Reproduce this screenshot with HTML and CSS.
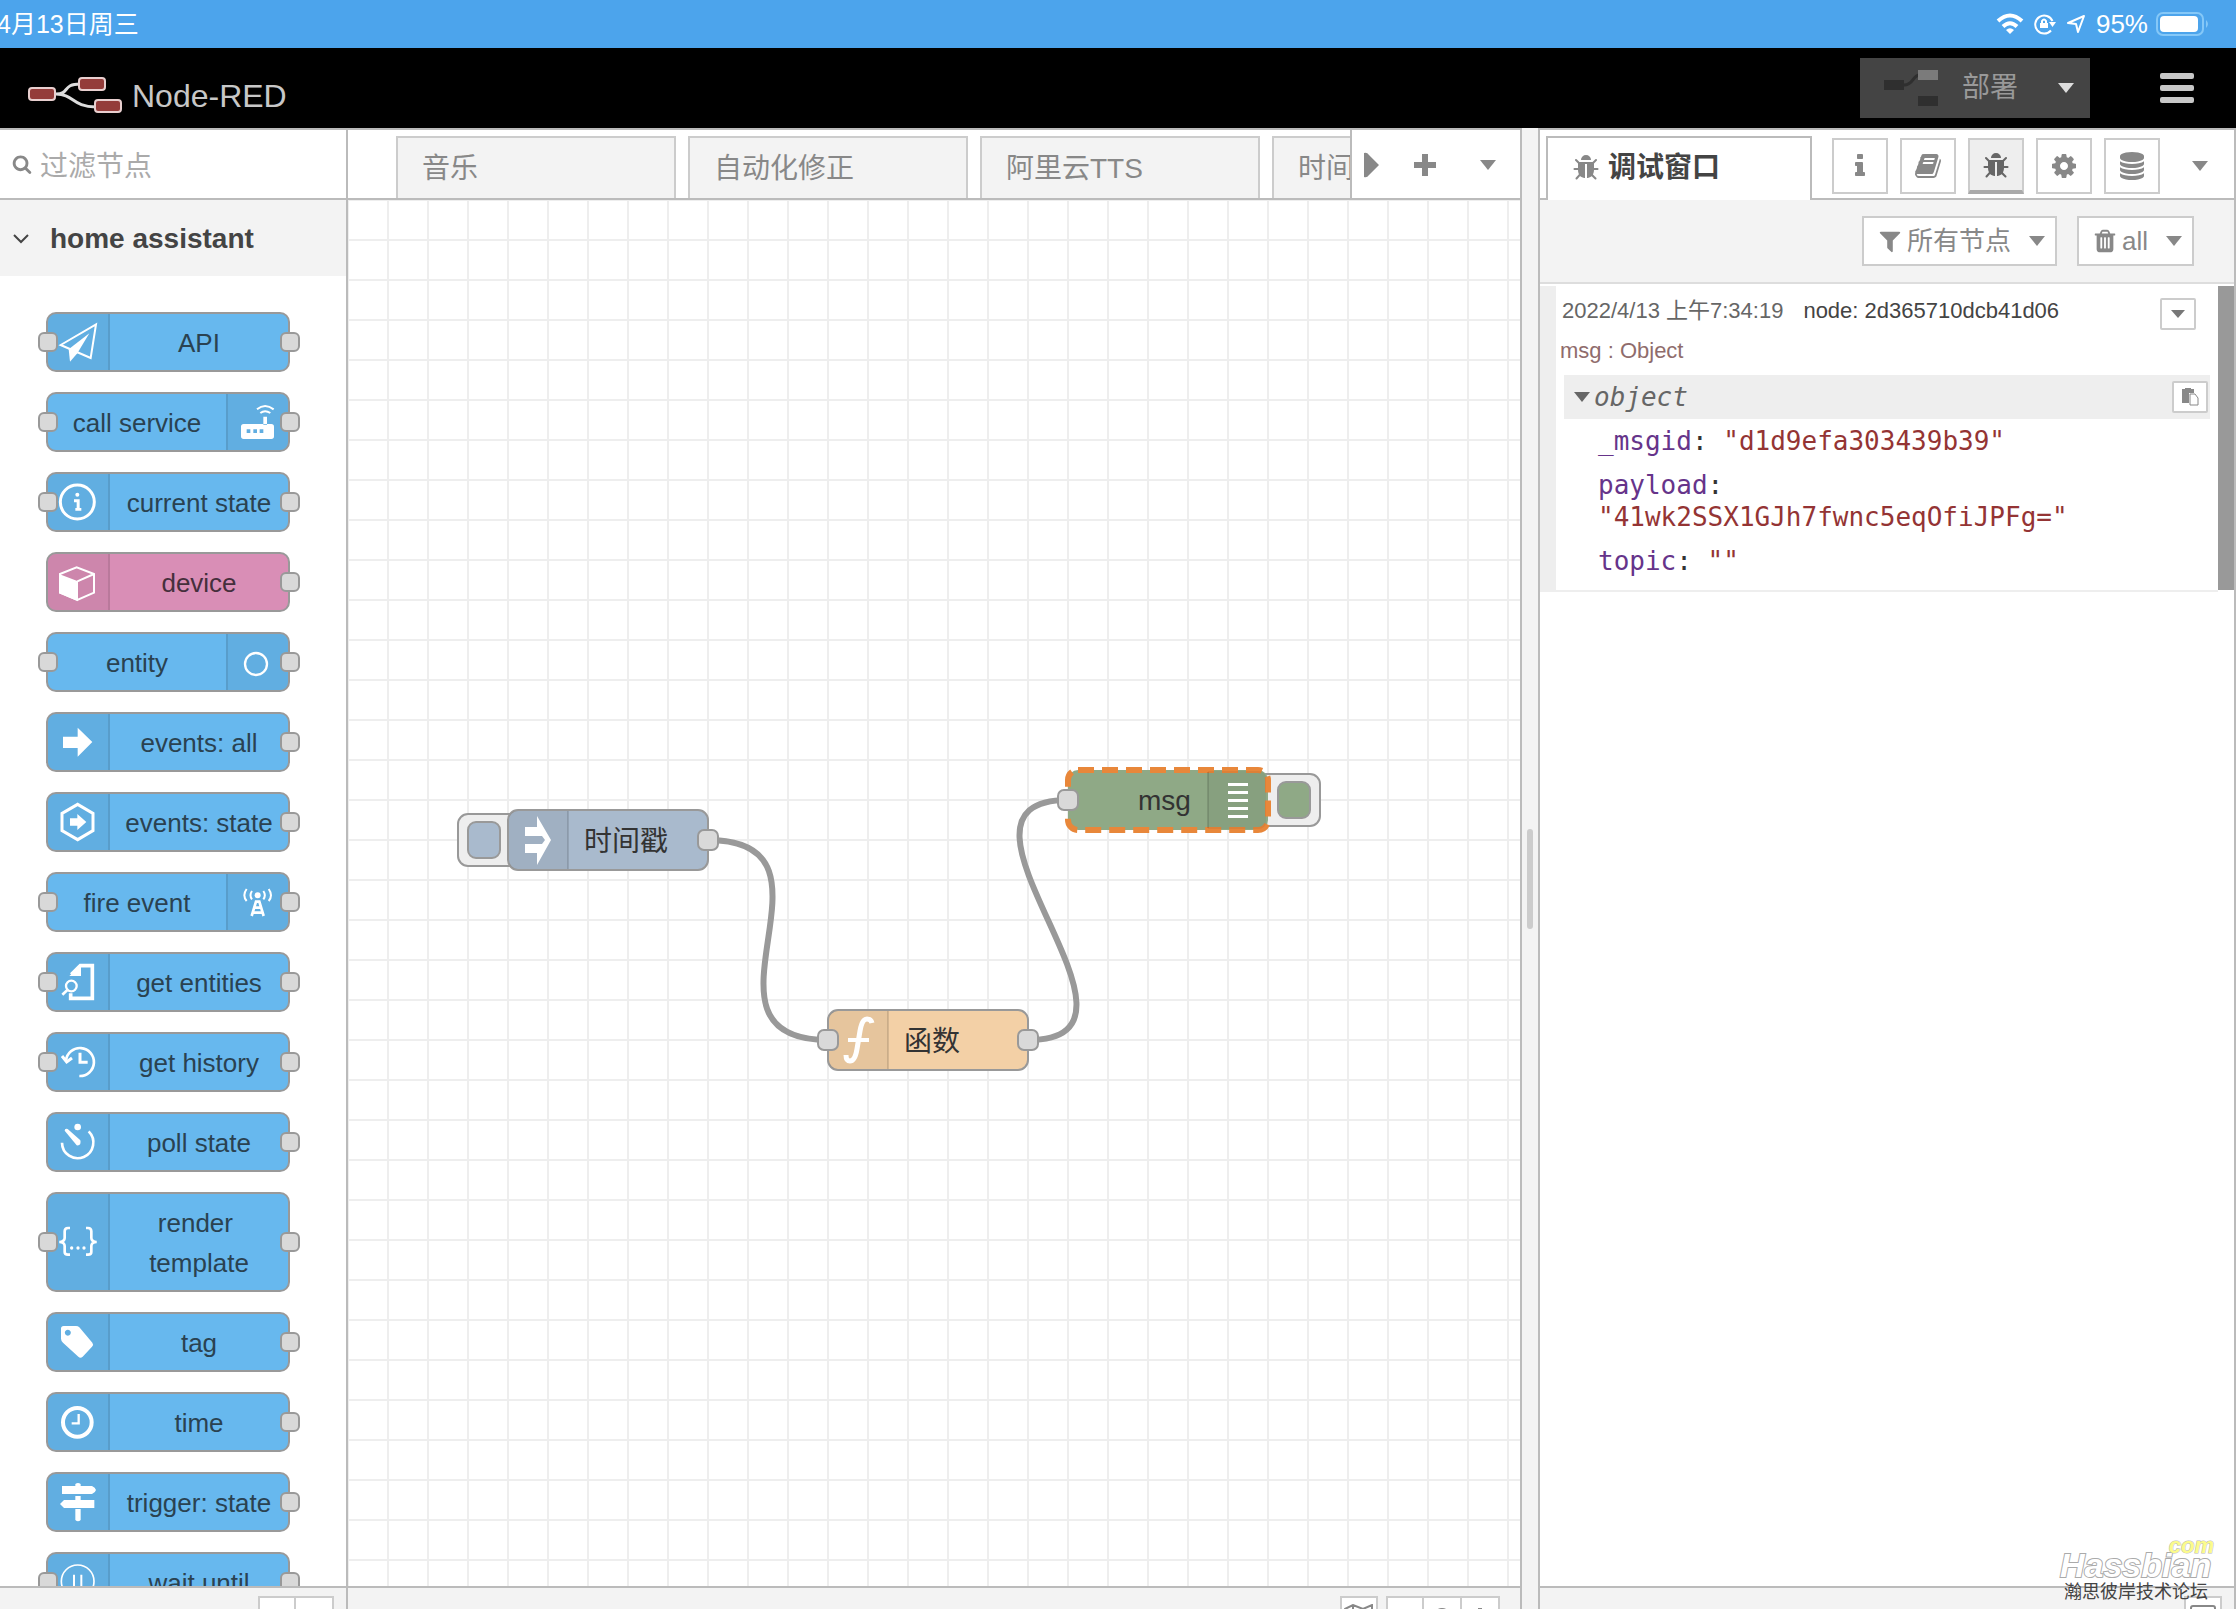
FILE: index.html
```html
<!DOCTYPE html>
<html lang="zh-CN">
<head>
<meta charset="utf-8">
<title>Node-RED</title>
<link rel="stylesheet" href="styles.css">
</head>
<body>
<svg class="defs" aria-hidden="true">
  <symbol id="bug" viewBox="0 0 1792 1792"><path d="M1696 960q0 26-19 45t-45 19h-224q0 171-67 290l208 209q19 19 19 45t-19 45q-18 19-45 19t-45-19l-198-197q-5 5-15 13t-42 28.5-65 36.5-82 29-97 13v-896h-128v896q-51 0-101.5-13.5t-87-33-66-39-43.5-32.5l-15-14-183 207q-20 21-48 21-24 0-43-16-19-18-20.5-44.5t15.5-46.5l202-227q-58-114-58-274h-224q-26 0-45-19t-19-45 19-45 45-19h224v-294l-173-173q-19-19-19-45t19-45 45-19 45 19l173 173h844l173-173q19-19 45-19t45 19 19 45-19 45l-173 173v294h224q26 0 45 19t19 45zm-480-576h-640q0-133 93.5-226.5t226.5-93.5 226.5 93.5 93.5 226.5z"/></symbol>
</svg>

<div class="status">
  <span class="date">4月13日周三</span>
  <span class="status-right">
    <svg width="28" height="22" viewBox="0 0 28 22" fill="none" stroke="#fff" stroke-width="4"><path d="M2 8Q14-3 26 8"/><path d="M7 13.500Q14 7 21 13.500"/><path d="M14 21l-4-4q4-3.500 8 0z" fill="#fff" stroke="none"/></svg>
    <svg width="22" height="22" viewBox="0 0 22 22" fill="none" stroke="#fff" stroke-width="2"><path d="M17 17.500A9 9 0 1 1 18.500 8"/><path d="M15 9h7l-3.500 5z" fill="#fff" stroke="none"/><path d="M6 10h8v5H6z" fill="#fff" stroke="none"/><path d="M8 11V8q2-3 4 0v3"/></svg>
    <svg width="20" height="20" viewBox="0 0 20 20" fill="none" stroke="#fff" stroke-width="2" stroke-linejoin="round"><path d="M2 9L18 2 12 18 10 10z"/></svg>
    <span class="percent">95%</span>
    <svg width="52" height="24" viewBox="0 0 52 24"><rect x="1" y="1" width="46" height="22" rx="6" fill="none" stroke="#85c8f8" stroke-width="2"/><rect x="4" y="4" width="38" height="16" rx="4" fill="#fff"/><path d="M50 8q4 4 0 8z" fill="#85c8f8"/></svg>
  </span>
</div>

<header class="header">
  <a class="logo" href="#">
    <svg width="96" height="38" viewBox="0 0 96 38"><g fill="none" stroke="#ddd" stroke-width="3"><path d="M28 18C42 18 34 8 52 8M28 18C46 18 44 31 68 31"/></g><g fill="#943c3a" stroke="#e8cfcf" stroke-width="2"><rect x="1" y="12" width="26" height="12" rx="3"/><rect x="51" y="2" width="26" height="12" rx="3"/><rect x="67" y="24" width="26" height="12" rx="3"/></g></svg>
    <span>Node-RED</span>
  </a>
  <div class="header-tools">
    <button class="deploy">
      <svg width="54" height="36" viewBox="0 0 54 36"><path class="link" d="M20 15C30 15 28 5 36 5"/><path d="M0 10h20v10H0zM34 26h20v10H34z" fill="#2f2f2f"/><path d="M34 0h20v10H34z" fill="#7b7b7b"/></svg>
      <span>部署</span><i class="caret"></i>
    </button>
    <button class="menu" aria-label="menu"><i></i><i></i><i></i></button>
  </div>
</header>

<main class="main">
  <aside class="palette">
    <label class="search">
      <svg class="glyph" width="20" height="20" viewBox="0 0 1792 1792"><path d="M1216 832q0-185-131.500-316.500t-316.500-131.500-316.500 131.500-131.500 316.500 131.500 316.500 316.500 131.500 316.500-131.500 131.500-316.500zm512 832q0 52-38 90t-90 38q-54 0-90-38l-343-342q-179 124-399 124-143 0-273.500-55.500t-225-150-150-225-55.500-273.500 55.500-273.500 150-225 225-150 273.500-55.500 273.500 55.500 225 150 150 225 55.500 273.500q0 220-124 399l343 343q37 37 37 90z"/></svg>
      <input type="text" placeholder="过滤节点">
    </label>
    <div class="category"><svg width="18" height="12" viewBox="0 0 18 12" fill="none" stroke="#444" stroke-width="2"><path d="M2 2l7 7 7-7"/></svg>home assistant</div>
    <div class="nodes">
      <div class="node in out"><svg class="icon" viewBox="0 0 180 168"><path class="line" d="M38 93L144 31 128 132z"/><path d="M124 58L62 106 66 143 88 118z"/></svg><span>API</span></div>
      <div class="node in out right"><svg class="icon" viewBox="0 0 180 168"><path fill-rule="evenodd" d="M47 90h83q8 0 8 8v29q0 8-8 8H47q-8 0-8-8V98q0-8 8-8zM56 106v11h11v-11zM76 106v11h11v-11zM95 106v11h11v-11zM106 68h11v24h-11z"/><path class="line" d="M87 46Q111 26 137 46M97 57Q111 46 127 57"/></svg><span>call service</span></div>
      <div class="node in out"><svg class="icon" viewBox="0 0 180 168"><circle class="line" cx="88" cy="84" r="51" stroke-width="9"/><circle cx="88" cy="62" r="6"/><path d="M78 76h17v26h5v8H82v-8h4V85h-8z"/></svg><span>current state</span></div>
      <div class="node out pink"><svg class="icon" viewBox="0 0 180 168"><path class="line" d="M36 60L86 40 138 60V116L88 138 36 116zM88 82L138 60"/><path d="M33 60L90 82V142L33 118z"/></svg><span>device</span></div>
      <div class="node in out right"><svg class="icon" viewBox="0 0 180 168"><circle class="line" cx="84" cy="90" r="33" stroke-width="7"/></svg><span>entity</span></div>
      <div class="node out"><svg class="icon" viewBox="0 0 180 168"><path d="M45 68H89V41L133 84 89 128V102H45z"/></svg><span>events: all</span></div>
      <div class="node out"><svg class="icon" viewBox="0 0 180 168"><path class="line" stroke-width="9" d="M89 31L135 58V110L89 137 42 110V58z"/><path d="M66 73H88V60L115 84 88 108V95H66z"/></svg><span>events: state</span></div>
      <div class="node in out right"><svg class="icon" viewBox="0 0 180 168"><circle cx="89" cy="64" r="9"/><path class="line" d="M72 51Q63 64 72 76M56 45Q42 64 56 81M106 51Q115 64 106 76M122 45Q136 64 122 81"/><path class="line" stroke-width="8" d="M71 126L84 83h10L107 126M76 116h26M81 101h16"/></svg><span>fire event</span></div>
      <div class="node in out"><svg class="icon" viewBox="0 0 180 168"><path class="line" stroke-width="11" d="M70 62L97 35H133V133H68V118"/><path d="M64 66H99V32z"/><circle class="line" cx="70" cy="96" r="16" stroke-width="7"/><path class="line" stroke-width="8" d="M58 108L43 122"/></svg><span>get entities</span></div>
      <div class="node in out"><svg class="icon" viewBox="0 0 180 168"><path class="line" stroke-width="8" d="M54 80A42 42 0 1 1 94 126"/><path class="line" stroke-width="9" d="M42 66L56 84 72 72M96 56V85H119"/></svg><span>get history</span></div>
      <div class="node out"><svg class="icon" viewBox="0 0 180 168"><path class="line" stroke-width="8" d="M42 86A47 47 0 1 0 122 52"/><circle cx="89" cy="39" r="10"/><path d="M50 50Q50 42 59 45L97 79Q101 96 86 94z"/></svg><span>poll state</span></div>
      <div class="node in out tall"><svg class="icon" viewBox="0 0 180 168"><path class="line" stroke-width="8" d="M66 42H60Q50 42 50 52V72Q50 83 34 84 50 85 50 96V114Q50 122 60 122H66M114 42h6q10 0 10 10v20q0 11 16 12-16 1-16 12v18q0 8-10 8h-6"/><circle cx="71" cy="102" r="5"/><circle cx="90" cy="102" r="5"/><circle cx="108" cy="102" r="5"/></svg><span>render&nbsp;<br>template</span></div>
      <div class="node out"><svg class="icon" viewBox="0 0 180 168"><path fill-rule="evenodd" d="M39 44Q39 36 47 36H84Q90 36 94 40L133 86Q138 92 132 98L104 128Q97 134 91 128L45 86Q39 80 39 74zM59 47a9 9 0 1 0 1 0z"/></svg><span>tag</span></div>
      <div class="node out"><svg class="icon" viewBox="0 0 180 168"><circle class="line" cx="88" cy="85" r="43" stroke-width="12"/><path class="line" stroke-width="7" d="M92 60V88H71"/></svg><span>time</span></div>
      <div class="node out"><svg class="icon" viewBox="0 0 180 168"><path d="M42 36H82V30q8-6 16 0v6H132q10 4 12 12-2 8-12 12H42zM82 66H98V78H139V102H48L36 90 48 78H82zM82 105H98V138q-8 8-16 0z"/></svg><span>trigger: state</span></div>
      <div class="node in out"><svg class="icon" viewBox="0 0 180 168"><circle class="line" cx="89" cy="82" r="49" stroke-width="5"/><path class="line" d="M78 62V102M100 62V102"/></svg><span>wait until</span></div>
    </div>
    <footer class="foot"><div class="group"><button aria-label="collapse all"></button><button aria-label="expand all"></button></div></footer>
  </aside>

  <section class="workspace">
    <nav class="tabs">
      <div class="tab-list"><button>音乐</button><button>自动化修正</button><button>阿里云TTS</button><button>时间</button></div>
      <div class="tab-tools">
        <button aria-label="scroll"><svg width="16" height="26" viewBox="0 0 16 26"><path d="M0 1V25Q3 26 5 23L15 13 5 3Q3 0 0 1z"/></svg></button>
        <button aria-label="add"><svg width="22" height="22" viewBox="0 0 22 22"><path d="M8 0h6v8h8v6h-8v8H8v-8H0V8h8z"/></svg></button>
        <button class="last" aria-label="list"><i class="caret"></i></button>
      </div>
    </nav>
    <div class="canvas">
      <svg class="flow" width="1174" height="1400" viewBox="348 200 1174 1400">
        <defs><pattern id="grid" x="348" y="200" width="40" height="40" patternUnits="userSpaceOnUse"><path d="M39 0h1v40h-1zM0 0h1v40H0zM0 39h40v1H0zM0 0h40v1H0z" fill="#eee"/></pattern></defs>
        <rect x="348" y="200" width="1174" height="1400" fill="url(#grid)"/>
        <g class="wire"><path d="M708 840C858 840 678 1040 828 1040"/><path d="M1028 1040C1178 1040 918 800 1068 800"/></g>
        <g class="shape">
          <rect x="458" y="814" width="64" height="52" rx="10" fill="#eee"/>
          <rect x="468" y="822" width="32" height="36" rx="8" fill="#a9bacd"/>
          <rect x="508" y="810" width="200" height="60" rx="10" fill="#a9bacd"/>
          <rect x="828" y="1010" width="200" height="60" rx="10" fill="#f3d0a6"/>
          <rect x="1256" y="774" width="64" height="52" rx="10" fill="#eee"/>
          <rect x="1278" y="782" width="32" height="36" rx="8" fill="#8fa986"/>
          <rect x="1068" y="770" width="200" height="60" rx="10" fill="#8fa986" class="selected"/>
        </g>
        <path class="shade" d="M568 811V869H517Q509 869 509 861V819Q509 811 517 811zM888 1011V1069H837Q829 1069 829 1061V1019Q829 1011 837 1011zM1208 771V829H1258Q1266 829 1266 821V779Q1266 771 1258 771z"/>
        <path class="divider" d="M568 811V869M888 1011V1069M1208 772V828"/>
        <path fill="#fff" d="M525 827h12V816L551 840 537 865V853H525V844H542L545 840 542 836H525z"/>
        <path fill="none" stroke="#fff" stroke-width="5" d="M872 1023q-1-4-5-4-5 0-7 12l-3 18q-2 12-7 12-4 0-4-6"/><path d="M848 1038h21v4h-21zM1228 783h20v3h-20zM1228 791h20v3h-20zM1228 799h20v3h-20zM1228 807h20v3h-20zM1228 815h20v3h-20z" fill="#fff"/>
        <g class="shape" fill="#d9d9d9"><rect x="698" y="830" width="20" height="20" rx="6"/><rect x="818" y="1030" width="20" height="20" rx="6"/><rect x="1018" y="1030" width="20" height="20" rx="6"/><rect x="1058" y="790" width="20" height="20" rx="6"/></g>
        <g class="flow-label"><text x="584" y="851">时间戳</text><text x="904" y="1051">函数</text><text x="1138" y="810">msg</text></g>
      </svg>
    </div>
    <footer class="foot">
      <button class="single" aria-label="navigator"><svg class="outline" width="32" height="26" viewBox="0 0 32 26"><path d="M2 5L10 1 20 5 29 1V22L20 26 10 22 2 26zM10 1V22M20 5V26"/></svg></button>
      <div class="group"><button aria-label="zoom out"></button><button aria-label="reset"><svg class="outline" width="18" height="18" viewBox="0 0 18 18"><circle cx="9" cy="9" r="7" stroke-width="4"/></svg></button><button aria-label="zoom in"><svg width="18" height="18" viewBox="0 0 18 18"><path d="M7 0h4v7h7v4h-7v7H7v-7H0V7h7z"/></svg></button></div>
    </footer>
  </section>

  <div class="separator"><i></i></div>

  <aside class="sidebar">
    <nav class="side-tabs">
      <button class="active-tab"><svg width="28" height="28"><use href="#bug"/></svg>调试窗口</button>
      <div class="side-icons">
        <button aria-label="info"><svg width="28" height="28" viewBox="0 0 1792 1792"><path d="M1216 1344v128q0 26-19 45t-45 19h-512q-26 0-45-19t-19-45v-128q0-26 19-45t45-19h64v-384h-64q-26 0-45-19t-19-45v-128q0-26 19-45t45-19h384q26 0 45 19t19 45v576h64q26 0 45 19t19 45zm-128-1152v192q0 26-19 45t-45 19h-256q-26 0-45-19t-19-45v-192q0-26 19-45t45-19h256q26 0 45 19t19 45z"/></svg></button>
        <button aria-label="help"><svg width="28" height="28" viewBox="0 0 1792 1792"><path d="M1703 478q40 57 18 129l-275 906q-19 64-76.500 107.500t-122.500 43.500h-923q-77 0-148.500-53.500t-99.500-131.500q-24-67-2-127 0-4 3-27t4-37q1-8-3-21.500t-3-19.500q2-11 8-21t16.500-23.500 16.500-23.500q23-38 45-91.500t30-91.500q3-10 .5-30t-.5-28q3-11 17-28t17-23q21-36 42-92t25-90q1-9-2.500-32t.5-28q4-13 22-30.500t22-22.500q19-26 42.500-84.500t27.500-96.500q1-8-3-25.500t-2-26.500q2-8 9-18t18-23 17-21q8-12 16.500-30.500t15-35 16-36 19.500-32 26.500-23.500 36-11.500 47.500 5.500l-1 3q38-9 51-9h761q74 0 114 56t18 130l-274 906q-36 119-71.500 153.500t-128.500 34.500h-869q-27 0-38 15-11 16-1 43 24 70 144 70h923q29 0 56-15.500t35-41.500l300-987q7-22 5-57 38 15 59 43zm-1064 2q-4 13 2 22.500t20 9.500h608q13 0 25.500-9.500t16.500-22.500l21-64q4-13-2-22.500t-20-9.500h-608q-13 0-25.500 9.500t-16.500 22.500zm-83 256q-4 13 2 22.500t20 9.500h608q13 0 25.500-9.500t16.500-22.500l21-64q4-13-2-22.500t-20-9.500h-608q-13 0-25.500 9.500t-16.500 22.500z"/></svg></button>
        <button class="on" aria-label="debug"><svg width="28" height="28"><use href="#bug"/></svg></button>
        <button aria-label="config"><svg width="28" height="28" viewBox="0 0 1792 1792"><path d="M1152 896q0-106-75-181t-181-75-181 75-75 181 75 181 181 75 181-75 75-181zm512-109v222q0 12-8 23t-20 13l-185 28q-19 54-39 91 35 50 107 138 10 12 10 25t-9 23q-27 37-99 108t-94 71q-12 0-26-9l-138-108q-44 23-91 38-16 136-29 186-7 28-36 28h-222q-14 0-24.500-8.500t-11.500-21.500l-28-184q-49-16-90-37l-141 107q-10 9-25 9-14 0-25-11-126-114-165-168-7-10-7-23 0-12 8-23 15-21 51-66.500t54-70.500q-27-50-41-99l-183-27q-13-2-21-12.500t-8-23.500v-222q0-12 8-23t19-13l186-28q14-46 39-92-40-57-107-138-10-12-10-24 0-10 9-23 26-36 98.500-107.500t94.500-71.500q13 0 26 10l138 107q44-23 91-38 16-136 29-186 7-28 36-28h222q14 0 24.500 8.500t11.500 21.500l28 184q49 16 90 37l142-107q9-9 24-9 13 0 25 10 129 119 165 170 7 8 7 22 0 12-8 23-15 21-51 66.500t-54 70.500q26 50 41 98l183 28q13 2 21 12.500t8 23.500z"/></svg></button>
        <button aria-label="context"><svg width="28" height="28" viewBox="0 0 1792 1792"><path d="M896 768q237 0 443-43t325-127v170q0 69-103 128t-280 93.500-385 34.500-385-34.500-280-93.500-103-128v-170q119 84 325 127t443 43zm0 768q237 0 443-43t325-127v170q0 69-103 128t-280 93.500-385 34.500-385-34.500-280-93.500-103-128v-170q119 84 325 127t443 43zm0-384q237 0 443-43t325-127v170q0 69-103 128t-280 93.500-385 34.500-385-34.500-280-93.500-103-128v-170q119 84 325 127t443 43zm0-1152q208 0 385 34.500t280 93.500 103 128v128q0 69-103 128t-280 93.500-385 34.500-385-34.500-280-93.500-103-128v-128q0-69 103-128t280-93.500 385-34.500z"/></svg></button>
      </div>
      <button class="side-more" aria-label="more"><i class="caret"></i></button>
    </nav>
    <div class="toolbar">
      <button><svg width="26" height="26" viewBox="0 0 1792 1792"><path d="M1595 295q17 41-14 70l-493 493v742q0 42-39 59-13 5-25 5-27 0-45-19l-256-256q-19-19-19-45v-486l-493-493q-31-29-14-70 17-39 59-39h1280q42 0 59 39z"/></svg><span>所有节点</span><i class="caret"></i></button>
      <button><svg width="26" height="26" viewBox="0 0 1792 1792"><path fill-rule="evenodd" d="M704 1376v-704q0-14-9-23t-23-9h-64q-14 0-23 9t-9 23v704q0 14 9 23t23 9h64q14 0 23-9t9-23zm256 0v-704q0-14-9-23t-23-9h-64q-14 0-23 9t-9 23v704q0 14 9 23t23 9h64q14 0 23-9t9-23zm256 0v-704q0-14-9-23t-23-9h-64q-14 0-23 9t-9 23v704q0 14 9 23t23 9h64q14 0 23-9t9-23zm-544-992h448l-48-117q-7-9-17-11h-317q-10 2-17 11zm928 32v64q0 14-9 23t-23 9h-96v948q0 83-47 143.500t-113 60.500h-832q-66 0-113-58.500t-47-141.500v-952h-96q-14 0-23-9t-9-23v-64q0-14 9-23t23-9h309l70-167q15-37 54-63t79-26h320q40 0 79 26t54 63l70 167h309q14 0 23 9t9 23z"/></svg><span>all</span><i class="caret"></i></button>
    </div>
    <div class="messages">
      <article class="message">
        <div class="meta"><span>2022/4/13 上午7:34:19</span><a href="#">node: 2d365710dcb41d06</a><button aria-label="options"><i class="caret"></i></button></div>
        <div class="topic">msg : Object</div>
        <div class="object"><i class="caret"></i><em>object</em><button aria-label="copy"><svg width="18" height="18" viewBox="0 0 18 18"><path d="M1 1h3V0h6v1h3v4H8v10H1z"/><path d="M9 6h5l3 4v7H9z" fill="#fff" stroke="#888" stroke-width="1"/></svg></button></div>
        <div class="row"><b>_msgid</b>: <span>"d1d9efa303439b39"</span></div>
        <div class="row"><b>payload</b>:<br><span>"41wk2SSX1GJh7fwnc5eqOfiJPFg="</span></div>
        <div class="row"><b>topic</b>: <span>""</span></div>
      </article>
      <div class="scrollbar"></div>
    </div>
    <footer class="foot"><button class="single" aria-label="open window"><svg class="outline" width="26" height="24" viewBox="0 0 26 24"><rect x="1" y="1" width="24" height="20" rx="2"/></svg></button></footer>
  </aside>
</main>

<div class="watermark"><span class="brand">Hassbian</span><span class="com">com</span><span class="cn">瀚思彼岸技术论坛</span></div>
</body>
</html>
```
FILE: styles.css
```css
*, *::before, *::after { box-sizing: border-box; }
body {
  margin: 0; height: 100vh; display: flex; flex-direction: column; overflow: hidden;
  font: 28px/40px "Liberation Sans", "Noto Sans CJK SC", sans-serif; color: #888; background: #fff;
}
button { font: inherit; color: inherit; border: 0; margin: 0; padding: 0; background: none; display: flex; align-items: center; justify-content: center; }
a { color: inherit; text-decoration: none; }
svg { display: block; flex: none; }
button svg, .glyph { fill: #888; }
button svg.outline { fill: none; stroke: #888; stroke-width: 2px; }
.defs { position: absolute; width: 0; height: 0; }
.caret { flex: none; width: 16px; height: 10px; background: currentColor; clip-path: polygon(0 0, 100% 0, 50% 100%); }

.status { flex: none; height: 48px; background: #4ca4ec; color: #fff; display: flex; align-items: center; justify-content: space-between; font-size: 25px; padding-right: 28px; overflow: hidden; }
.date { margin-left: -3px; }
.status-right { display: flex; align-items: center; gap: 10px; }
.percent { font-size: 26px; margin-right: -2px; }

.header { flex: none; height: 80px; background: #000; color: #c7c7c7; display: flex; align-items: center; justify-content: space-between; padding: 0 42px 0 28px; }
.logo { display: flex; align-items: center; gap: 8px; font-size: 32px; padding-top: 15px; }
.logo svg { margin-bottom: 2px; }
.header-tools { display: flex; align-items: center; gap: 70px; }
.deploy { width: 230px; height: 60px; background: #444; color: #999; gap: 24px; padding: 0 16px 0 24px; justify-content: flex-start; }
.deploy .caret { color: #ddd; margin-left: auto; }
.link { fill: none; stroke: #2f2f2f; stroke-width: 3px; }
.menu { width: 34px; flex-direction: column; gap: 6px; }
.menu i { width: 100%; height: 6px; background: #c7c7c7; border-radius: 2px; }

.main { flex: 1; min-height: 0; display: grid; grid-template-columns: 348px minmax(0, 1fr) 16px 698px; }
.palette, .workspace, .sidebar { display: flex; flex-direction: column; min-height: 0; min-width: 0; border-top: 2px solid #bbb; border-right: 2px solid #bbb; }
.foot { flex: none; height: 23px; border-top: 2px solid #bbb; background: #f3f3f3; padding: 8px 12px 0; display: flex; justify-content: flex-end; align-items: flex-start; gap: 8px; overflow: hidden; }
.foot button { height: 38px; background: #fff; border: 2px solid #ccc; width: 38px; padding-top: 4px; }
.group { display: flex; }
.group button { width: 38px; }
.group button + button { border-left: 0; }

.search { flex: none; height: 70px; border-bottom: 2px solid #bbb; display: flex; align-items: center; padding: 5px 12px 0; gap: 8px; }
.search .glyph { margin-bottom: 6px; }
.search input { border: 0; outline: 0; padding: 0; min-width: 0; flex: 1; font: inherit; background: none; }
.search input::placeholder { color: #aaa; opacity: 1; }
.category { flex: none; height: 76px; background: #f3f3f3; color: #444; font-weight: bold; display: flex; align-items: center; padding: 2px 12px 0; gap: 20px; }
.nodes { flex: 1; min-height: 0; overflow: hidden; padding: 36px 56px 0 46px; display: flex; flex-direction: column; gap: 20px; }
.node { flex: none; position: relative; height: 60px; border: 2px solid #999; border-radius: 10px; background: #67b8ee; color: #2a4251; display: flex; align-items: stretch; font-size: 26px; }
.node.right { flex-direction: row-reverse; }
.node.tall { height: 100px; }
.node.pink { background: #d98eb6; color: #452f3c; }
.node span { flex: 1; display: flex; align-items: center; justify-content: center; text-align: center; white-space: nowrap; padding-top: 2px; }
.node.tall span { display: block; padding-top: 9px; }
.icon { width: 62px; height: 100%; border-right: 2px solid rgba(0, 0, 0, .1); background: rgba(0, 0, 0, .05); border-radius: 8px 0 0 8px; fill: #fff; }
.right .icon { border-right: 0; border-left: 2px solid rgba(0, 0, 0, .1); border-radius: 0 8px 8px 0; }
.line { fill: none; stroke: #fff; }
.line:not([stroke-width]) { stroke-width: 6px; }
.in::before, .out::after { content: ""; position: absolute; top: calc(50% - 10px); width: 20px; height: 20px; border: 2px solid #999; border-radius: 6px; background: #d9d9d9; }
.in::before { left: -10px; }
.out::after { right: -12px; }

.tabs { flex: none; height: 70px; border-bottom: 2px solid #bbb; display: flex; padding-left: 48px; }
.tab-list { flex: 1; min-width: 0; overflow: hidden; display: flex; gap: 12px; padding-top: 6px; }
.tab-list button { flex: none; width: 280px; border: 2px solid #ccc; border-bottom: 0; background: #f3f3f3; justify-content: flex-start; padding: 2px 24px 0; }
.tab-tools { width: 170px; border-left: 2px solid #bbb; display: flex; align-items: center; padding: 2px 24px 0 12px; gap: 34px; }
.tab-tools .last { margin-left: auto; }
.canvas { flex: 1; min-height: 0; overflow: hidden; }
.wire { fill: none; stroke: #999; stroke-width: 6px; }
.shape { stroke: #999; stroke-width: 2px; }
.selected { stroke: #e8873a; stroke-width: 6px; stroke-dasharray: 16 8; }
.shade { fill: rgba(0, 0, 0, .05); }
.divider { stroke: rgba(0, 0, 0, .12); stroke-width: 2px; }
.flow-label { font-size: 28px; fill: #333; }
.workspace .foot { padding-right: 20px; }

.separator { background: #f3f3f3; display: flex; align-items: center; justify-content: center; }
.separator i { width: 6px; height: 100px; border-radius: 3px; background: #ccc; margin-top: 20px; }

.sidebar { border-left: 2px solid #bbb; }
.side-tabs { flex: none; height: 70px; border-bottom: 2px solid #bbb; display: flex; align-items: flex-start; padding: 0 26px 0 6px; }
.active-tab { width: 266px; height: 64px; margin-top: 6px; border: 2px solid #bbb; border-bottom: 0; background: #fff; color: #444; font-weight: bold; justify-content: flex-start; gap: 8px; padding: 0 24px 2px; }
.side-icons { display: flex; gap: 12px; padding: 8px 0 0 20px; flex: 1; }
.side-icons button { width: 56px; height: 56px; border: 2px solid #ccc; background: #fff; }
.side-icons .on { background: #eee; border-bottom: 4px solid #aaa; }
.side-icons .on svg { fill: #666; margin-top: 2px; }
.side-more { height: 72px; }
.toolbar { flex: none; height: 84px; border-bottom: 2px solid #ddd; background: #f3f3f3; display: flex; justify-content: flex-end; gap: 20px; padding: 16px 40px 0; }
.toolbar button { height: 50px; border: 2px solid #ccc; background: #fff; padding: 0 10px 0 13px; gap: 4px; font-size: 26px; }
.toolbar .caret { margin-left: 14px; }
.messages { flex: 1; min-height: 0; display: flex; align-items: flex-start; padding-top: 2px; background: #fff; }
.message { flex: 1; border-left: 16px solid #eee; border-bottom: 2px solid #eee; padding: 9px 8px 7px 4px; font: 26px/32px "DejaVu Sans Mono", monospace; color: #333; }
.meta, .topic { font: 22px/32px "Liberation Sans", "Noto Sans CJK SC", sans-serif; }
.meta { display: flex; gap: 20px; height: 40px; color: #666; padding: 0 14px 0 2px; }
.meta a { color: #444; flex: 1; }
.meta button, .object button { width: 36px; height: 32px; border: 2px solid #ccc; border-radius: 2px; background: #fff; color: #777; margin-top: 3px; }
.meta .caret { width: 14px; height: 8px; }
.topic { color: #8f6c6c; height: 40px; }
.object { height: 44px; margin-left: 4px; background: #eee; color: #666; display: flex; align-items: center; gap: 4px; padding: 0 2px 0 10px; }
.object button { margin-left: auto; margin-top: 0; }
.row { padding: 6px 0 6px 38px; }
.row b { font-weight: normal; color: #66348a; }
.row span { color: #943434; }
.scrollbar { width: 16px; height: 304px; background: #999; }

.watermark { position: absolute; right: 22px; bottom: 5px; width: 154px; height: 70px; }
.watermark span { position: absolute; white-space: nowrap; }
.brand { left: 0; top: 11px; font: italic bold 34px/40px "Liberation Sans", sans-serif; color: #fff; -webkit-text-stroke: 2px #aaa; paint-order: stroke fill; }
.com { right: 0; top: 0; font: italic bold 22px/24px "Liberation Sans", sans-serif; color: #fbfb8c; -webkit-text-stroke: 1px #bbb; paint-order: stroke fill; }
.cn { left: 4px; bottom: 0; font-size: 18px; line-height: 24px; color: #444; }
```
